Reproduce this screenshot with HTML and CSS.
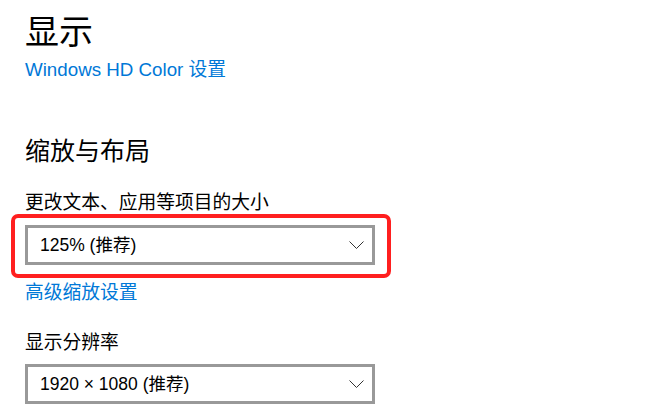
FILE: index.html
```html
<!DOCTYPE html>
<html lang="zh-CN">
<head>
<meta charset="utf-8">
<title>显示</title>
<link rel="stylesheet" href="styles.css">
</head>
<body>
<main class="page">
  <h1 class="title">显示</h1>
  <a class="link link-top" href="#">Windows HD Color 设置</a>
  <h2 class="section">缩放与布局</h2>
  <div class="label label-scale">更改文本、应用等项目的大小</div>
  <div class="highlight">
    <div class="select">
      <span class="select-value">125% (推荐)</span>
      <svg class="chevron" width="15" height="8" viewBox="0 0 15 8"><polyline points="0.5,0.5 7.5,7.5 14.5,0.5" fill="none" stroke="#333" stroke-width="1"/></svg>
    </div>
  </div>
  <a class="link link-adv" href="#">高级缩放设置</a>
  <div class="label label-res">显示分辨率</div>
  <div class="select select-res">
    <span class="select-value">1920 × 1080 (推荐)</span>
    <svg class="chevron" width="15" height="8" viewBox="0 0 15 8"><polyline points="0.5,0.5 7.5,7.5 14.5,0.5" fill="none" stroke="#333" stroke-width="1"/></svg>
  </div>
</main>
</body>
</html>
```
FILE: styles.css
```css
html, body {
  margin: 0;
  padding: 0;
  background: #ffffff;
}

body {
  font-family: "Liberation Sans", "Noto Sans CJK SC", sans-serif;
  color: #000000;
}

.page {
  display: flex;
  flex-direction: column;
  align-items: flex-start;
  padding-left: 25px;
}

.title {
  margin: 10px 0 0;
  font-family: "Noto Sans CJK SC", sans-serif;
  font-size: 34px;
  font-weight: 400;
  line-height: 40px;
}

.link {
  display: block;
  color: #0078d7;
  text-decoration: none;
  font-size: 18.75px;
  line-height: 22px;
}

.link-top {
  margin-top: 9px;
  line-height: 22px;
}

.section {
  margin: 53px 0 0;
  font-size: 25px;
  font-weight: 400;
  line-height: 34px;
}

.label {
  font-size: 18.75px;
  line-height: 22px;
}

.label-scale {
  margin-top: 24px;
}

.highlight {
  margin: 0 0 0 -14px;
  padding: 7px 12px 9px 10px;
  border: 4px solid #ff1f1f;
  border-radius: 7px;
}

.select {
  box-sizing: border-box;
  width: 350px;
  height: 40px;
  border: 3px solid #999999;
  padding: 0 8px 0 12px;
  display: flex;
  align-items: center;
  justify-content: space-between;
  font-size: 17.5px;
  background: #ffffff;
}

.select-value {
  line-height: 22px;
}

.chevron {
  display: block;
}

.link-adv {
  margin-top: 4px;
}

.label-res {
  margin-top: 28px;
}

.select-res {
  margin-top: 10px;
}
```
